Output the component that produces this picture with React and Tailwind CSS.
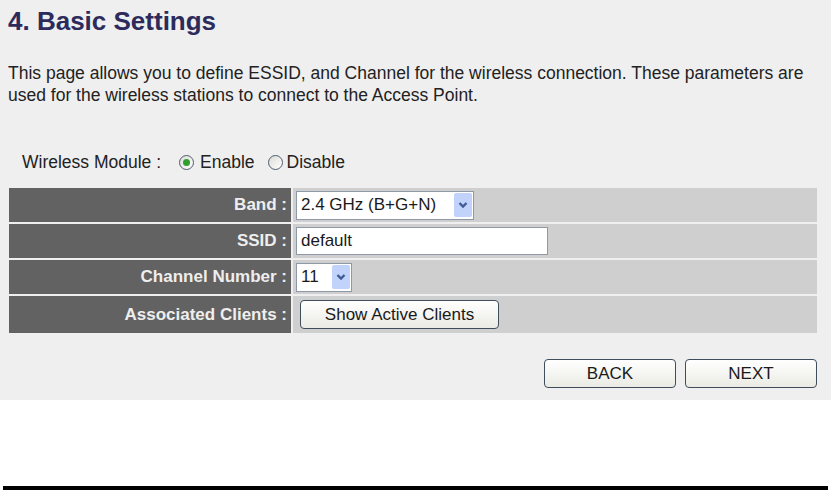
import { useState } from "react";

const font = { fontFamily: '"Liberation Sans", Arial, sans-serif' };

function Chevron() {
  return (
    <span className="flex h-[24px] w-[18px] items-center justify-center rounded-[2px] bg-[#c1d2fb]">
      <svg width="10" height="8" viewBox="0 0 10 8">
        <path d="M1.5 2 L5 5.5 L8.5 2" fill="none" stroke="#3f5b93" strokeWidth="2.4" />
      </svg>
    </span>
  );
}

function Radio({ checked, onClick }) {
  return (
    <span
      onClick={onClick}
      className="flex h-[15px] w-[15px] items-center justify-center rounded-full border border-[#4f5d6e] bg-gradient-to-br from-[#dcdcd6] to-white"
    >
      {checked && <span className="h-[7px] w-[7px] rounded-full bg-[#2f9e2f]" />}
    </span>
  );
}

function Row({ label, h, children }) {
  return (
    <div className={`flex gap-[2px] ${h}`}>
      <div className="flex w-[282px] items-center justify-end bg-[#626262] pr-[4px] text-[17px] font-bold text-[#eeeeee]">
        {label}
      </div>
      <div className="flex flex-1 items-center bg-[#cfcfcf] pl-[3px]">{children}</div>
    </div>
  );
}

const btn =
  "flex items-center justify-center rounded-[4px] border border-[#3f4d5c] bg-gradient-to-b from-white to-[#ebebe4] text-[17px] text-[#1a1a1a]";

export default function App() {
  const [enabled, setEnabled] = useState(true);

  return (
    <div className="flex h-[490px] w-[831px] flex-col bg-white" style={font}>
      <div className="flex h-[400px] flex-col bg-[#efefef] pl-[8px] pt-[6px]">
        <h1 className="text-[26px] font-bold leading-[30px] text-[#2c2b5c]">4. Basic Settings</h1>
        <p className="mt-[26px] w-[812px] text-[17.5px] leading-[22px] text-[#222222]">
          This page allows you to define ESSID, and Channel for the wireless connection. These parameters are used
          for the wireless stations to connect to the Access Point.
        </p>

        <div className="mt-[45px] flex h-[22px] items-center pl-[14px] text-[17.5px] text-[#222222]">
          <span>Wireless Module :</span>
          <span className="ml-[18px]">
            <Radio checked={enabled} onClick={() => setEnabled(true)} />
          </span>
          <span className="ml-[6px]">Enable</span>
          <span className="ml-[13px]">
            <Radio checked={!enabled} onClick={() => setEnabled(false)} />
          </span>
          <span className="ml-[4px]">Disable</span>
        </div>

        <div className="mt-[15px] ml-[1px] flex w-[808px] flex-col gap-[2px]">
          <Row label="Band :" h="h-[34px]">
            <div className="flex h-[29px] w-[178px] items-center justify-between border border-[#8d99a6] bg-white pl-[4px] pr-[1px] text-[17px] text-[#1a1a1a]">
              <span>2.4 GHz (B+G+N)</span>
              <Chevron />
            </div>
          </Row>
          <Row label="SSID :" h="h-[34px]">
            <input
              defaultValue="default"
              className="h-[28px] w-[252px] border border-[#8d99a6] bg-white pl-[4px] text-[17px] text-[#1a1a1a] outline-none"
            />
          </Row>
          <Row label="Channel Number :" h="h-[34px]">
            <div className="flex h-[29px] w-[56px] items-center justify-between border border-[#8d99a6] bg-white pl-[4px] pr-[1px] text-[17px] text-[#1a1a1a]">
              <span>11</span>
              <Chevron />
            </div>
          </Row>
          <Row label="Associated Clients :" h="h-[37px]">
            <button className={`${btn} ml-[4px] h-[29px] w-[199px]`}>Show Active Clients</button>
          </Row>
        </div>

        <div className="mt-[26px] flex w-[809px] justify-end gap-[9px]">
          <button className={`${btn} h-[29px] w-[132px]`}>BACK</button>
          <button className={`${btn} h-[29px] w-[132px]`}>NEXT</button>
        </div>
      </div>
      <div className="mx-[3px] mt-auto h-[4px] bg-black" />
    </div>
  );
}
